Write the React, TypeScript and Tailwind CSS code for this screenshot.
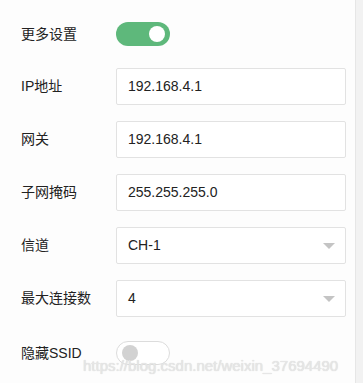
import React from 'react'

const font = { fontFamily: '"Liberation Sans", Arial, "Noto Sans CJK SC", sans-serif' }

function Toggle({ on }: { on: boolean }) {
  return on ? (
    <div className="flex h-[24px] w-[54px] items-center justify-end rounded-full bg-[#5eb87b] pr-[5px]">
      <div className="h-[16px] w-[16px] rounded-full bg-white" />
    </div>
  ) : (
    <div className="flex h-[24px] w-[54px] items-center rounded-full border border-[#dcdcdc] bg-white pl-[5px]">
      <div className="h-[16px] w-[16px] rounded-full bg-[#d2d2d2]" />
    </div>
  )
}

function Row({ label, children }: { label: string; children: React.ReactNode }) {
  return (
    <div className="flex items-center">
      <div className="w-[95px] text-[14px] text-[#222]">{label}</div>
      {children}
    </div>
  )
}

function Field({ value, select }: { value: string; select?: boolean }) {
  return (
    <div className="flex h-[37px] w-[230px] items-center justify-between rounded-[2px] border border-[#e2e2e2] bg-white pl-[11px] pr-[10px] text-[14px] text-[#222]">
      <span>{value}</span>
      {select && (
        <span className="h-0 w-0 border-x-[6px] border-t-[6px] border-x-transparent border-t-[#c4c4c4]" />
      )}
    </div>
  )
}

export default function App() {
  return (
    <div className="flex h-[383px] w-[363px] overflow-hidden bg-[#fdfdfd]" style={font}>
      <div className="relative flex flex-1 flex-col pl-[21px] pt-[22px]">
        <Row label="更多设置">
          <Toggle on />
        </Row>
        <div className="mt-[22px] flex flex-col gap-[16px]">
          <Row label="IP地址">
            <Field value="192.168.4.1" />
          </Row>
          <Row label="网关">
            <Field value="192.168.4.1" />
          </Row>
          <Row label="子网掩码">
            <Field value="255.255.255.0" />
          </Row>
          <Row label="信道">
            <Field value="CH-1" select />
          </Row>
          <Row label="最大连接数">
            <Field value="4" select />
          </Row>
        </div>
        <div className="mt-[24px]">
          <Row label="隐藏SSID">
            <Toggle on={false} />
          </Row>
        </div>
        <div className="absolute left-[83px] top-[355px] text-[15px] text-[#e6e6e6] [text-shadow:0_0_1px_#cfcfcf]">
          https://blog.csdn.net/weixin_37694490
        </div>
      </div>
      <div className="w-[8px] border-l border-[#e6e6e6] bg-[#f2f2f2]" />
    </div>
  )
}
